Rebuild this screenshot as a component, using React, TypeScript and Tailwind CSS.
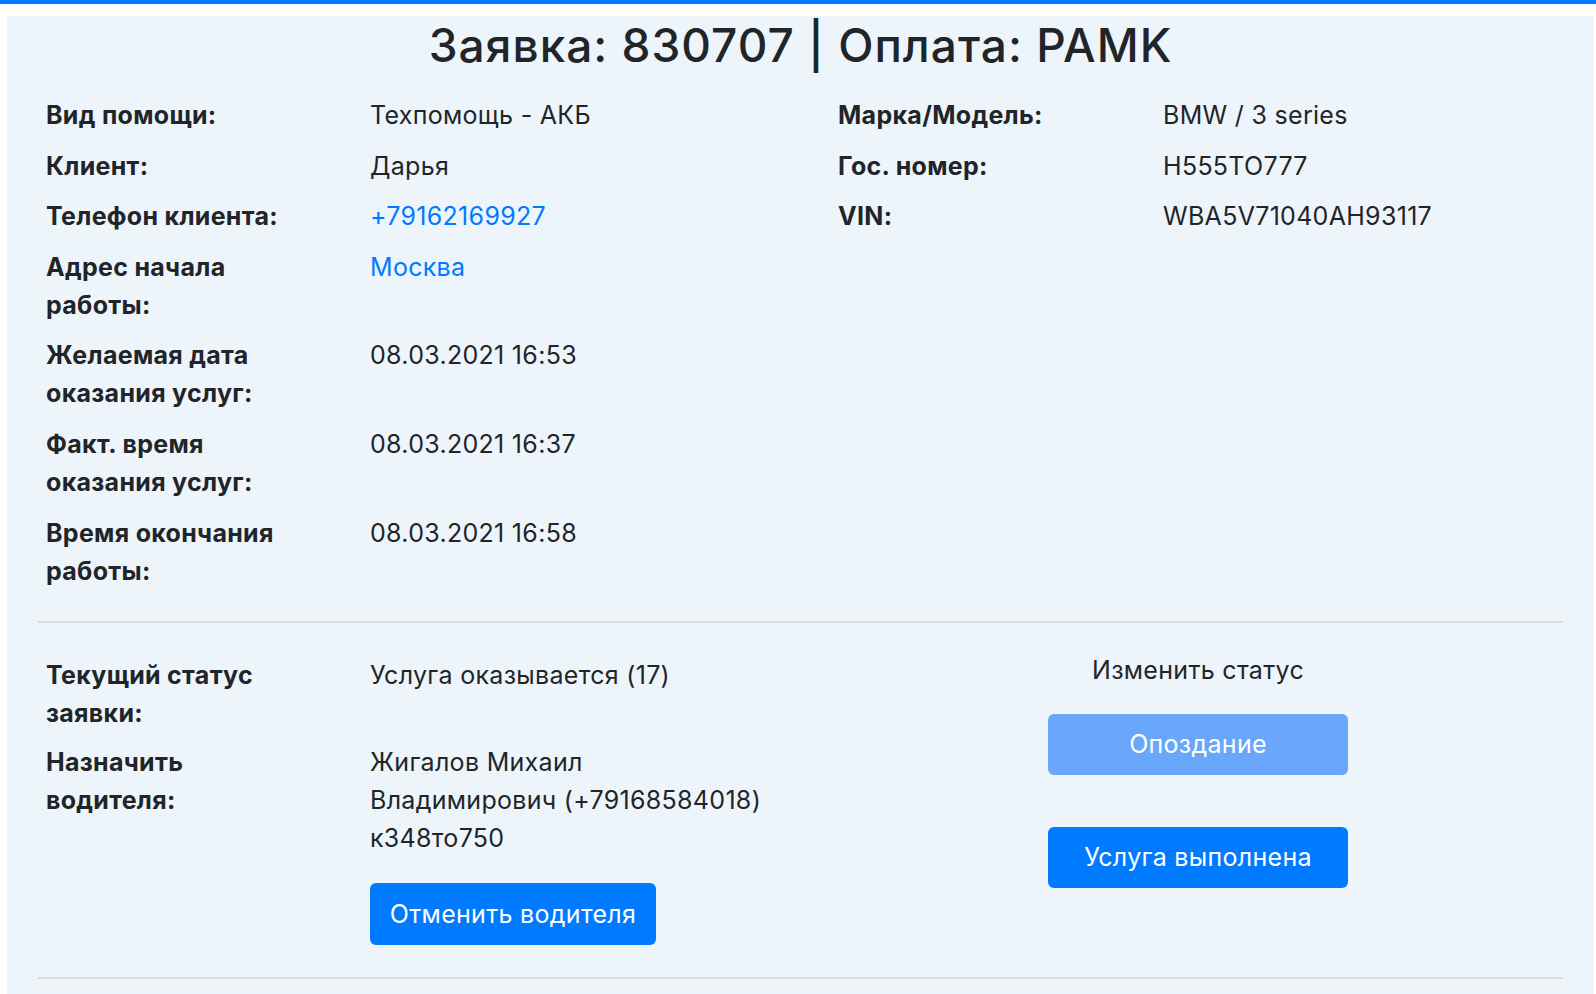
import React from "react";

type Row = { label: React.ReactNode; value: React.ReactNode };

function InfoRow({ label, value, labelW }: { label: React.ReactNode; value: React.ReactNode; labelW: string }) {
  return (
    <div className="flex">
      <div className={`${labelW} shrink-0 font-bold`}>{label}</div>
      <div>{value}</div>
    </div>
  );
}

export default function App() {
  const leftRows: Row[] = [
    { label: "Вид помощи:", value: "Техпомощь - АКБ" },
    { label: "Клиент:", value: "Дарья" },
    { label: "Телефон клиента:", value: <span className="text-[#007bff]">+79162169927</span> },
    {
      label: (
        <>
          Адрес начала
          <br />
          работы:
        </>
      ),
      value: <span className="text-[#007bff]">Москва</span>,
    },
    {
      label: (
        <>
          Желаемая дата
          <br />
          оказания услуг:
        </>
      ),
      value: "08.03.2021 16:53",
    },
    {
      label: (
        <>
          Факт. время
          <br />
          оказания услуг:
        </>
      ),
      value: "08.03.2021 16:37",
    },
    {
      label: (
        <>
          Время окончания
          <br />
          работы:
        </>
      ),
      value: "08.03.2021 16:58",
    },
  ];

  const rightRows: Row[] = [
    { label: "Марка/Модель:", value: "BMW / 3 series" },
    { label: "Гос. номер:", value: "H555TO777" },
    { label: "VIN:", value: "WBA5V71040AH93117" },
  ];

  return (
    <div className="h-[994px] overflow-hidden bg-white flex flex-col font-['Inter','Noto_Sans',sans-serif] text-[#212529] text-[25px] leading-[38px] tracking-[0.3px]">
      <div className="h-[4px] bg-[#007bff] shrink-0" />
      <div className="mt-[12px] ml-[7px] mr-[2px] flex-1 bg-[#edf5fb] px-[31px]">
        <h1 className="mt-[3px] text-center text-[46px] leading-[52px] font-medium tracking-[1px]">
          Заявка: 830707 | Оплата: PAMK
        </h1>

        <div className="mt-[25px] flex">
          <div className="w-[800px] shrink-0 pl-[8px] flex flex-col gap-[12.6px]">
            {leftRows.map((r, i) => (
              <InfoRow key={i} label={r.label} value={r.value} labelW="w-[324px]" />
            ))}
          </div>
          <div className="flex-1 flex flex-col gap-[12.6px]">
            {rightRows.map((r, i) => (
              <InfoRow key={i} label={r.label} value={r.value} labelW="w-[325px]" />
            ))}
          </div>
        </div>

        <div className="mt-[31px] h-[2px] bg-[#d8dee2]" />

        <div className="flex">
          <div className="w-[1010px] shrink-0 pl-[8px] pt-[33px] flex flex-col gap-[11px]">
            <InfoRow
              labelW="w-[324px]"
              label={
                <>
                  Текущий статус
                  <br />
                  заявки:
                </>
              }
              value="Услуга оказывается (17)"
            />
            <div className="flex">
              <div className="w-[324px] shrink-0 font-bold">
                Назначить
                <br />
                водителя:
              </div>
              <div className="flex flex-col">
                <div>
                  Жигалов Михаил
                  <br />
                  Владимирович (+79168584018)
                  <br />
                  к348то750
                </div>
                <button className="mt-[26px] w-[286px] h-[62px] rounded-[6px] bg-[#007bff] text-white text-[25px] tracking-[0.3px]">
                  Отменить водителя
                </button>
              </div>
            </div>
          </div>
          <div className="w-[300px] pt-[28px] flex flex-col">
            <div className="text-center">Изменить статус</div>
            <button className="mt-[25px] h-[61px] rounded-[6px] bg-[#69a7fa] text-white text-[25px] tracking-[0.3px]">
              Опоздание
            </button>
            <button className="mt-[52px] h-[61px] rounded-[6px] bg-[#007bff] text-white text-[25px] tracking-[0.3px]">
              Услуга выполнена
            </button>
          </div>
        </div>

        <div className="mt-[32px] h-[2px] bg-[#d8dee2]" />
      </div>
    </div>
  );
}
